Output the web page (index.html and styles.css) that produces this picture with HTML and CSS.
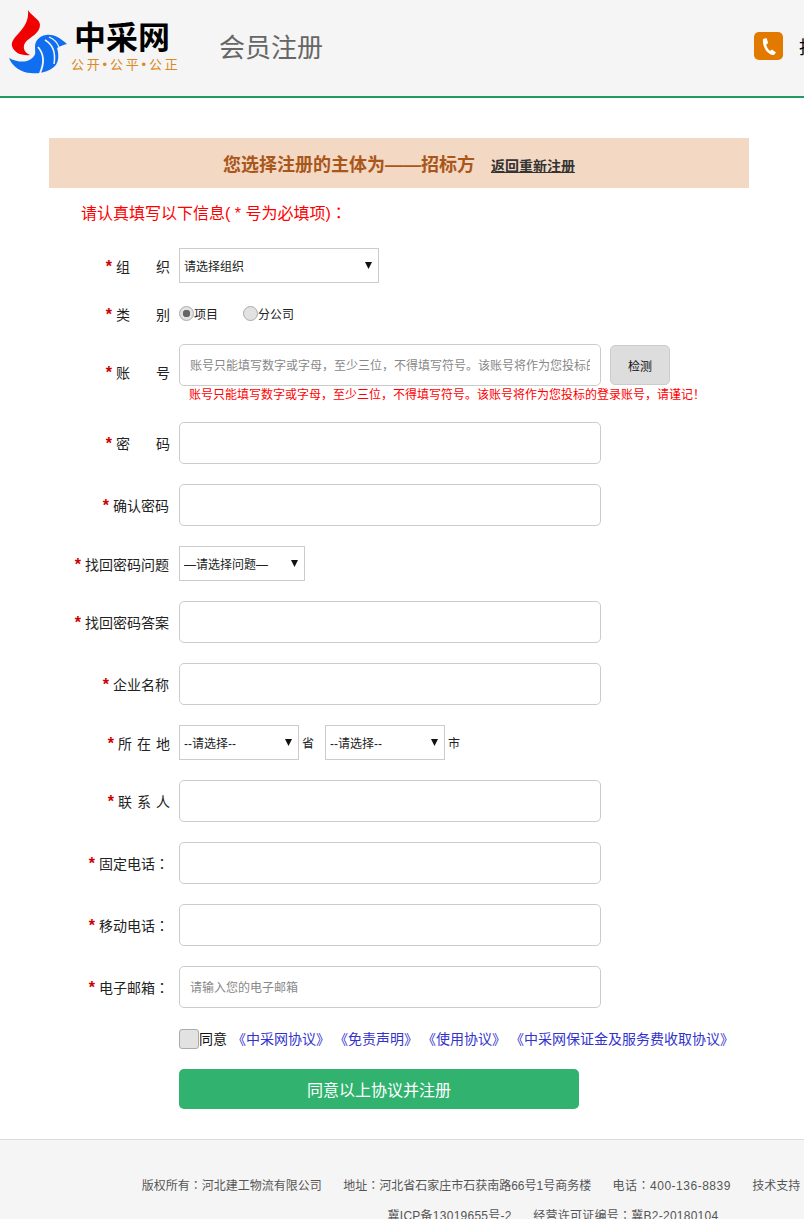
FILE: index.html
```html
<!DOCTYPE html>
<html lang="zh-CN">
<head>
  <meta charset="UTF-8" />
  <title>会员注册</title>
  <link rel="stylesheet" href="styles.css">
</head>
<body>
  <div class="header">
    <div class="logo">
      <svg class="logo-mark" width="60" height="66" viewBox="0 0 60 66">
        <path fill="#f00000" d="M19 0 C21 5 31 9 31 15 C31 24 20 27 16 33 C13 38 16 43 21 45 C13 46 5 43 3 36 C1 26 21 20 19 0Z" />
        <path fill="#0f6ff0" d="M58 34 C50 27 44 24 37 25 C30 26 26 31 26 37 C26 41 27 44 25 46 C21 52 12 54 0 48 C3 56 12 63 22 63 C30 64 40 62 46 56 C50 52 50 44 48 38 C51 36 54 35 58 34Z" />
        <path fill="none" stroke="#f5f5f5" stroke-width="1.5" d="M36 30 C43 34 47 42 45 54" />
        <path fill="none" stroke="#f5f5f5" stroke-width="1.8" d="M29 37 C35 44 36 52 31 63" />
        <path fill="none" stroke="#f5f5f5" stroke-width="1.2" d="M40 27 C45 29 48 32 50 37" />
      </svg>
      <div class="logo-text">
        <div class="logo-name">中采网</div>
        <div class="logo-slogan">公开•公平•公正</div>
      </div>
    </div>
    <div class="page-title">会员注册</div>
    <div class="contact">
      <svg class="contact-icon" width="29" height="28" viewBox="0 0 29 28">
        <rect width="29" height="28" rx="5" fill="#e27a00" />
        <path fill="#fff" d="M9 7 L12.5 6 L14.2 11 L12.2 12.6 C12.6 15 14 17.4 16 19 L18 17.5 L22 20.5 L20 23 C14 23.5 8 15 9 7Z" />
      </svg>
      <span class="contact-text">投诉电话：400-136-8839</span>
    </div>
  </div>

  <div class="main">
    <div class="banner">
      <span class="banner-title">您选择注册的主体为——招标方</span>
      <a class="banner-link" href="#">返回重新注册</a>
    </div>
    <p class="notice">请认真填写以下信息( * 号为必填项)<span class="colon">：</span></p>

    <form class="reg-form">
      <div class="row">
        <label class="label"><i>*</i><span class="wide">组织</span></label>
        <select class="select select-org"><option>请选择组织</option></select>
      </div>
      <div class="row row-radio">
        <label class="label"><i>*</i><span class="wide">类别</span></label>
        <label class="radio-item"><input type="radio" name="kind" checked />项目</label>
        <label class="radio-item"><input type="radio" name="kind" />分公司</label>
      </div>
      <div class="row">
        <label class="label label-up"><i>*</i><span class="wide">账号</span></label>
        <div>
          <div class="field-line">
            <input class="input" type="text" placeholder="账号只能填写数字或字母，至少三位，不得填写符号。该账号将作为您投标的登录账号，请谨记！" />
            <button class="check-btn" type="button">检测</button>
          </div>
          <div class="hint">账号只能填写数字或字母，至少三位，不得填写符号。该账号将作为您投标的登录账号，请谨记！</div>
        </div>
      </div>
      <div class="row">
        <label class="label"><i>*</i><span class="wide">密码</span></label>
        <input class="input" type="password" />
      </div>
      <div class="row">
        <label class="label"><i>*</i>确认密码</label>
        <input class="input" type="password" />
      </div>
      <div class="row">
        <label class="label"><i>*</i>找回密码问题</label>
        <select class="select select-question"><option>—请选择问题—</option></select>
      </div>
      <div class="row">
        <label class="label"><i>*</i>找回密码答案</label>
        <input class="input" type="text" />
      </div>
      <div class="row">
        <label class="label"><i>*</i>企业名称</label>
        <input class="input" type="text" />
      </div>
      <div class="row">
        <label class="label"><i>*</i><span class="spaced">所在地</span></label>
        <select class="select select-area"><option>--请选择--</option></select>
        <span class="unit">省</span>
        <select class="select select-area"><option>--请选择--</option></select>
        <span class="unit">市</span>
      </div>
      <div class="row">
        <label class="label"><i>*</i><span class="spaced">联系人</span></label>
        <input class="input" type="text" />
      </div>
      <div class="row">
        <label class="label"><i>*</i>固定电话<span class="colon">：</span></label>
        <input class="input" type="text" />
      </div>
      <div class="row">
        <label class="label"><i>*</i>移动电话<span class="colon">：</span></label>
        <input class="input" type="text" />
      </div>
      <div class="row">
        <label class="label"><i>*</i>电子邮箱<span class="colon">：</span></label>
        <input class="input" type="text" placeholder="请输入您的电子邮箱" />
      </div>
      <div class="agree">
        <input class="agree-box" type="checkbox" />
        <span class="agree-text">同意</span>
        <a href="#">《中采网协议》</a>
        <a href="#">《免责声明》</a>
        <a href="#">《使用协议》</a>
        <a href="#">《中采网保证金及服务费收取协议》</a>
      </div>
      <button class="submit-btn" type="button">同意以上协议并注册</button>
    </form>
  </div>

  <div class="footer">
    <p>
      <span>版权所有<b class="colon">：</b>河北建工物流有限公司</span>
      <span>地址<b class="colon">：</b>河北省石家庄市石获南路66号1号商务楼</span>
      <span class="num">电话<b class="colon">：</b>400-136-8839</span>
      <span class="last">技术支持<b class="colon">：</b>河北中采网络科技有限公司</span>
    </p>
    <p class="icp">
      <span>冀ICP备13019655号-2</span>
      <span>经营许可证编号<b class="colon">：</b>冀B2-20180104</span>
    </p>
  </div>
</body>
</html>
```

FILE: styles.css
```css
html {
  overflow: hidden;
}

body {
  width: 1106px;
  margin: 0;
  font-family: "Liberation Sans", "Noto Sans CJK SC", sans-serif;
  font-size: 14px;
  color: #222;
  background: #fff;
}

/* centred full-width colon, the SC face sets it low on the left */
.colon {
  font-family: "Noto Sans CJK TC", sans-serif;
  font-feature-settings: "locl" 0;
  font-weight: 400;
  line-height: 1;
}

.header {
  display: flex;
  align-items: center;
  height: 96px;
  background: #f5f5f5;
  border-bottom: 2px solid #239a62;
}

.logo {
  display: flex;
  width: 219px;
  height: 96px;
}

.logo-mark {
  margin: 10px 0 0 9px;
}

.logo-text {
  margin-left: 2px;
  padding-top: 19px;
}

.logo-name {
  font-size: 32px;
  line-height: 38px;
  font-weight: 700;
  color: #000;
  margin-left: 3px;
}

.logo-slogan {
  font-size: 13px;
  line-height: 16px;
  letter-spacing: 2.8px;
  color: #d98a25;
  white-space: nowrap;
}

.page-title {
  width: 535px;
  margin-bottom: 6px;
  font-size: 26px;
  color: #666;
}

.contact {
  display: flex;
  align-items: center;
  margin-bottom: 4px;
}

.contact-icon {
  margin-right: 16px;
}

.contact-text {
  font-size: 18px;
  color: #000;
  white-space: nowrap;
}

.main {
  width: 700px;
  margin: 40px 0 0 49px;
}

.banner {
  height: 50px;
  line-height: 54px;
  text-align: center;
  background: #f3d8c3;
}

.banner-title {
  font-size: 18px;
  font-weight: 700;
  color: #a9561a;
  margin-right: 12px;
}

.banner-link {
  font-size: 14px;
  font-weight: 700;
  color: #333;
}

.notice {
  height: 24px;
  margin: 14px 0 22px 32px;
  font-size: 16px;
  line-height: 24px;
  color: #f00;
}

.row {
  display: flex;
  align-items: center;
  margin-bottom: 20px;
}

.row-radio {
  height: 21px;
}

.label {
  flex: none;
  width: 120px;
  margin-right: 10px;
  text-align: right;
  color: #222;
  white-space: nowrap;
}

.label-up {
  margin-bottom: 2px;
}

.label i {
  font-style: normal;
  font-weight: 700;
  font-size: 16px;
  color: #c00;
  margin-right: 4px;
}

.wide {
  letter-spacing: 26px;
  margin-right: -27px;
}

.spaced {
  letter-spacing: 5px;
  margin-right: -6px;
}

.select {
  height: 35px;
  padding: 2px 4px 0;
  border: 1px solid #ccc;
  border-radius: 0;
  background: #fff url("data:image/svg+xml,%3Csvg xmlns='http://www.w3.org/2000/svg' width='7' height='7'%3E%3Cpath d='M0 0h7L3.5 7z' fill='%23111'/%3E%3C/svg%3E") no-repeat right 6px top 13px;
  font: inherit;
  font-size: 12px;
  color: #222;
  appearance: none;
}

.select-org {
  width: 200px;
}

.select-question {
  width: 126px;
}

.select-area {
  width: 120px;
}

.unit {
  font-size: 12px;
  margin: 0 11px 0 3px;
}

.radio-item {
  display: flex;
  align-items: center;
  width: 64px;
  font-size: 12px;
}

.radio-item input {
  width: 15px;
  height: 15px;
  margin: 0;
  border: 1px solid #aaa;
  border-radius: 50%;
  background: #e2e2e2;
  appearance: none;
}

.radio-item input:checked {
  background: radial-gradient(circle, #666 0 3.5px, #e2e2e2 4px);
}

.input {
  box-sizing: border-box;
  width: 422px;
  height: 42px;
  padding: 2px 10px 0;
  border: 1px solid #ccc;
  border-radius: 5px;
  font: inherit;
  font-size: 12px;
}

.input::placeholder {
  color: #888;
}

.field-line {
  display: flex;
  align-items: center;
}

.check-btn {
  width: 60px;
  height: 40px;
  margin-left: 9px;
  border: 1px solid #ccc;
  border-radius: 5px;
  background: #ddd;
  font: inherit;
  font-size: 12px;
  color: #111;
}

.hint {
  height: 16px;
  padding-left: 10px;
  font-size: 12px;
  line-height: 18px;
  color: #f00;
  white-space: nowrap;
}

.agree {
  display: flex;
  align-items: center;
  height: 20px;
  margin: 21px 0 20px 130px;
}

.agree-box {
  width: 20px;
  height: 20px;
  margin: 0;
  border: 1px solid #aaa;
  border-radius: 3px;
  background: #e2e2e2;
  appearance: none;
}

.agree-text {
  margin: 0 5px 3px 0;
  color: #111;
}

.agree a {
  margin: 0 4px 3px 0;
  color: #3333cc;
  text-decoration: none;
}

.submit-btn {
  display: block;
  width: 400px;
  height: 40px;
  margin-left: 130px;
  border: none;
  border-radius: 5px;
  background: #31b36f;
  font: inherit;
  font-size: 16px;
  color: #fff;
}

.footer {
  height: 90px;
  margin-top: 30px;
  padding-top: 31px;
  border-top: 1px solid #ddd;
  background: #f5f5f5;
  font-size: 12px;
  color: #555;
  text-align: center;
}

.footer p {
  margin: 0;
  line-height: 30px;
  white-space: nowrap;
}

.footer span {
  margin: 0 9px;
}

.footer .num {
  letter-spacing: 0.5px;
}

.footer .icp {
  letter-spacing: 0.25px;
}

.footer .last {
  margin-right: 17px;
}
```
